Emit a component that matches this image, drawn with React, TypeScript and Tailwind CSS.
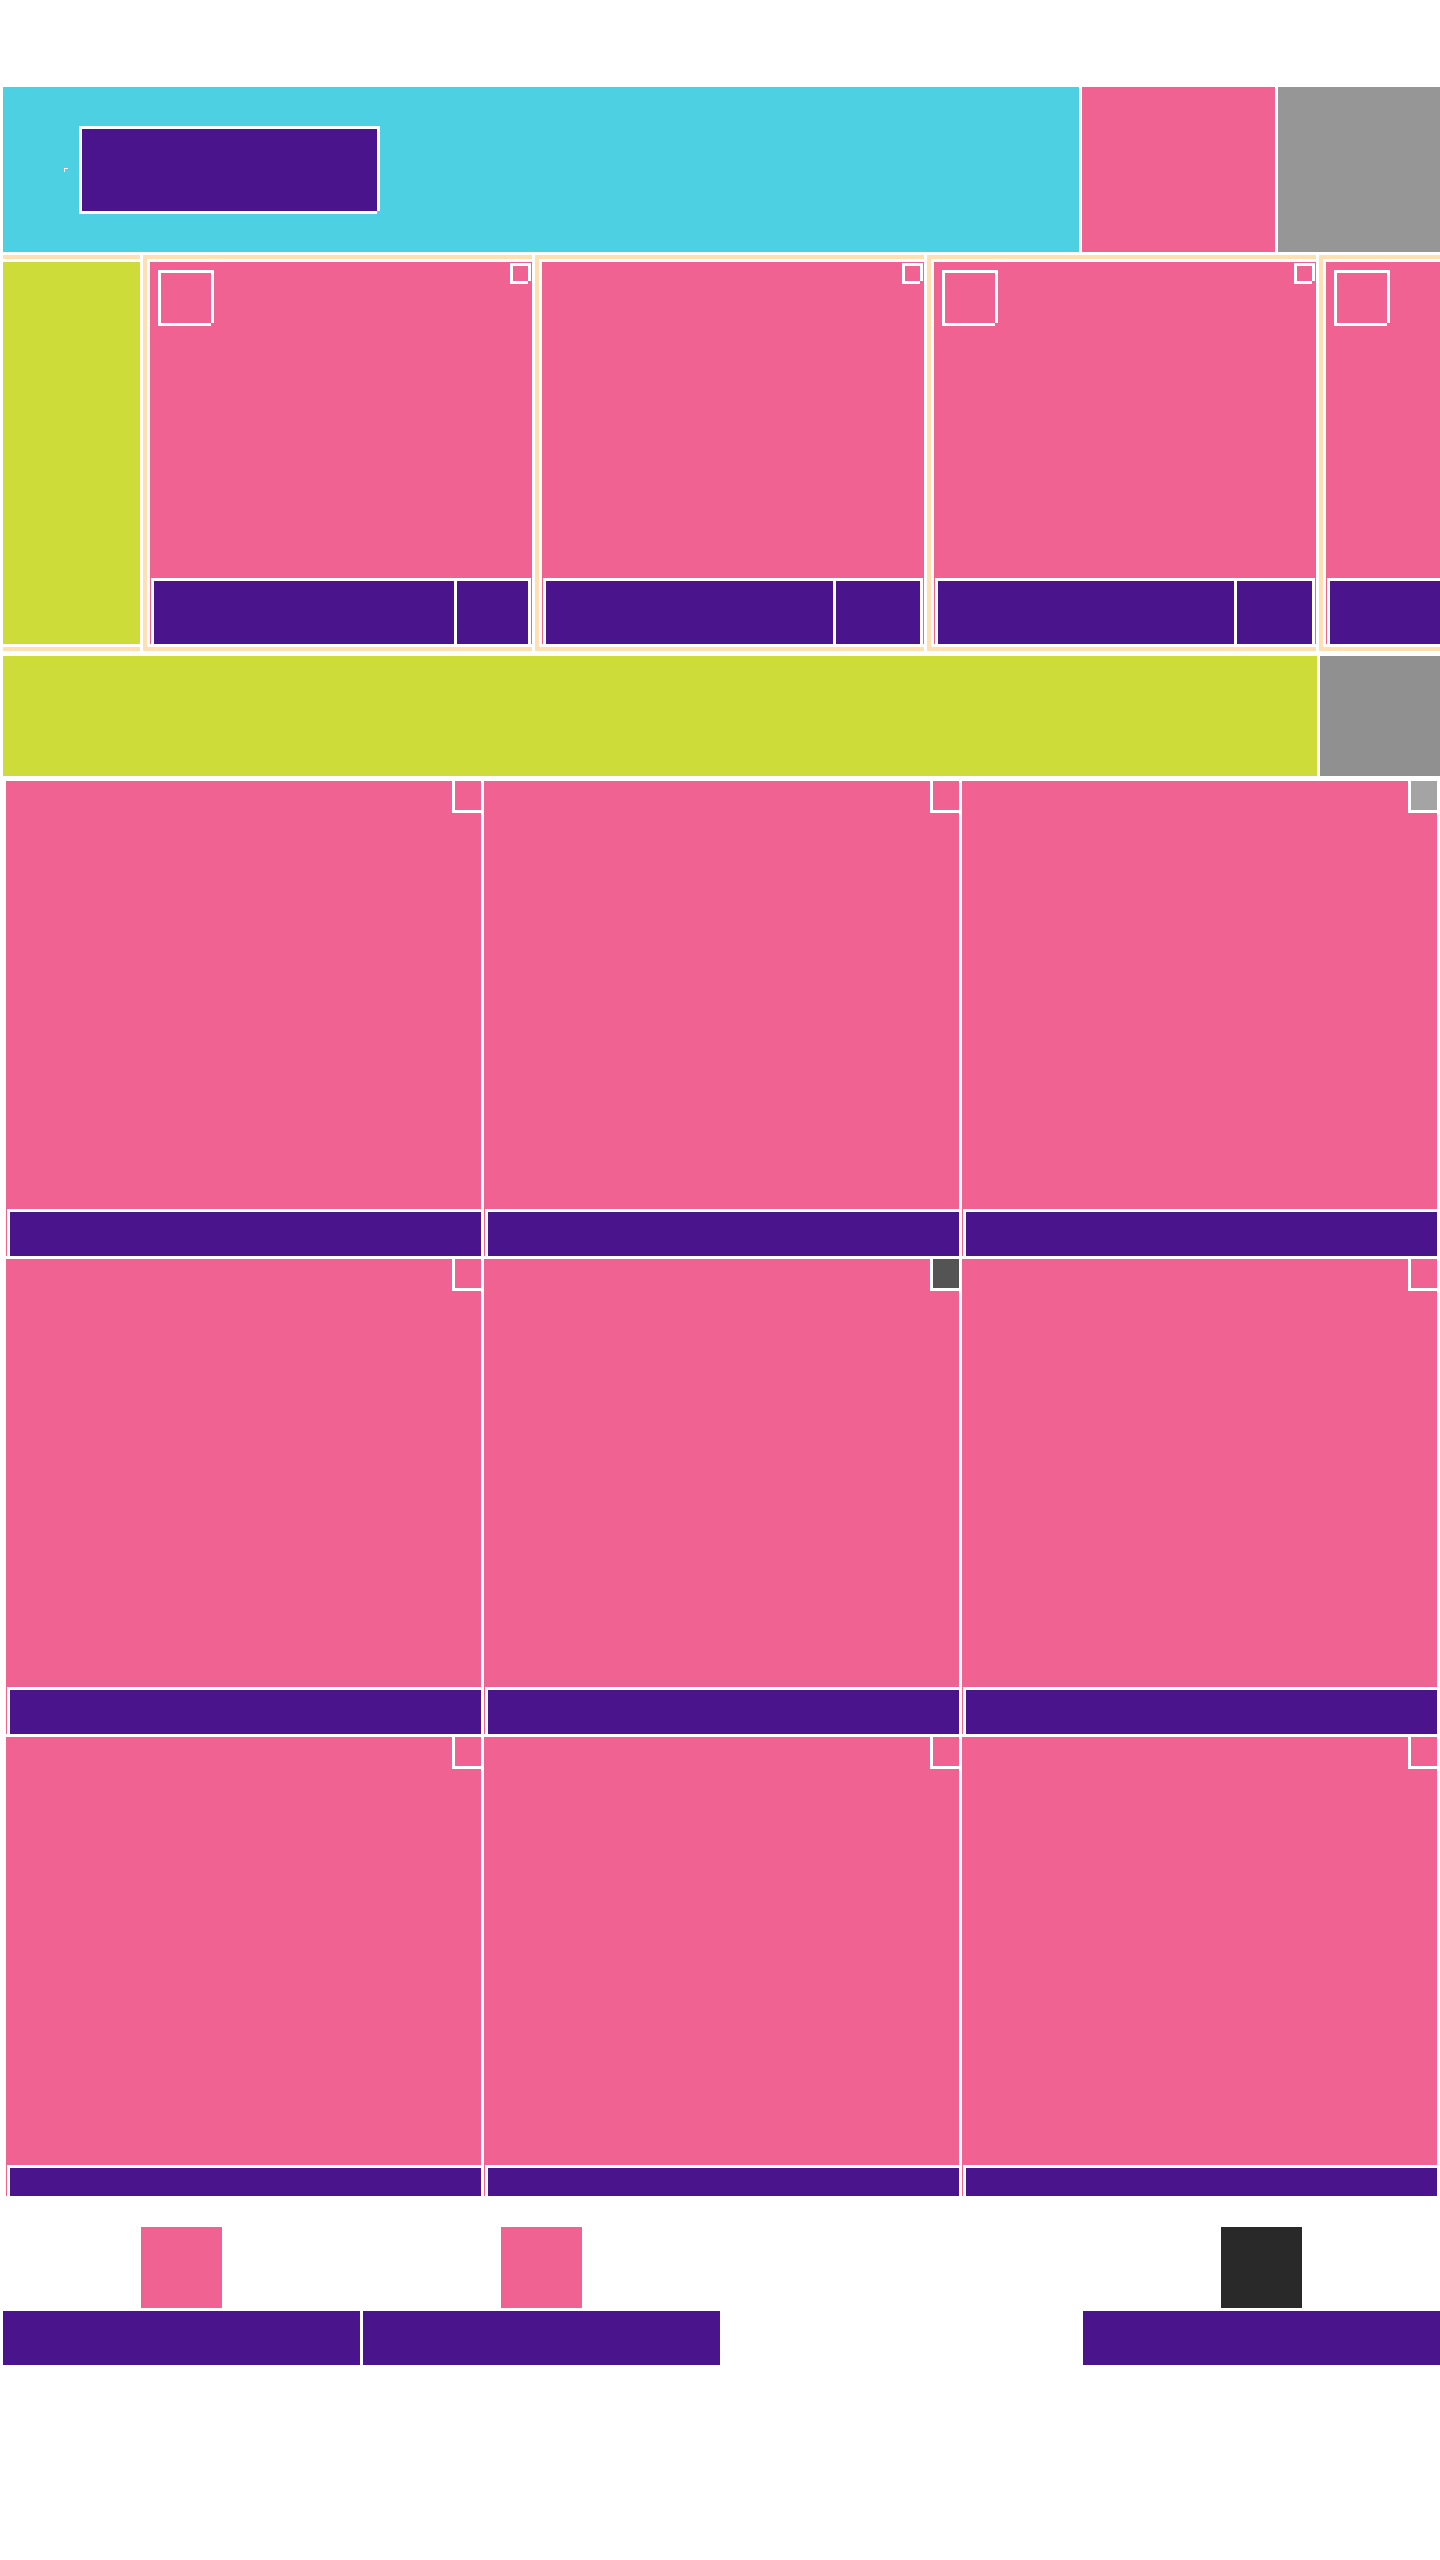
import clsx from 'clsx';

type StoryCard = { badge: boolean; metaWidth: string };

const stories: StoryCard[] = [
  { badge: true, metaWidth: 'w-[71px]' },
  { badge: false, metaWidth: 'w-[84px]' },
  { badge: true, metaWidth: 'w-[75px]' },
  { badge: true, metaWidth: 'w-[75px]' },
];

const tileMarks: string[] = [
  'bg-[#f06292]',
  'bg-[#f06292]',
  'bg-[#a4a4a4]',
  'bg-[#f06292]',
  'bg-[#545454]',
  'bg-[#f06292]',
  'bg-[#f06292]',
  'bg-[#f06292]',
  'bg-[#f06292]',
];

const tabs = [
  { name: 'First tab', icon: 'bg-[#f06292]', label: 'bg-[#4a148c]' },
  { name: 'Second tab', icon: 'bg-[#f06292]', label: 'bg-[#4a148c]' },
  { name: 'Third tab', icon: 'bg-white', label: 'bg-white' },
  { name: 'Fourth tab', icon: 'bg-[#292929]', label: 'bg-[#4a148c]' },
];

/* White outlined box whose bottom right corner is notched. */
function Frame({ className, notch }: { className: string; notch: string }) {
  return (
    <div className={clsx('border-3 border-white', className)}>
      <span className={clsx('absolute -right-[3px] -bottom-[3px] size-[3px]', notch)} />
    </div>
  );
}

function Header() {
  return (
    <header className="flex h-[165px] gap-[3px] pl-[3px]">
      <div className="flex flex-1 items-center bg-[#4dd0e1] pl-[61px]">
        <span className="size-1 border-t border-l border-white" />
        <Frame className="relative ml-[11px] h-[88px] w-[301px] bg-[#4a148c]" notch="bg-[#4dd0e1]" />
      </div>
      <button type="button" aria-label="Picture" className="w-[193px] bg-[#f06292]" />
      <button type="button" aria-label="Menu" className="w-[162px] bg-[#969696]" />
    </header>
  );
}

function Story({ card }: { card: StoryCard }) {
  return (
    <article className="w-[389px] shrink-0 bg-[#ffe0b2] py-1 pl-1">
      <div className="relative flex h-full flex-col justify-end border-y-3 border-l-3 border-white bg-[#f06292] px-px">
        {card.badge && (
          <Frame className="absolute top-2 left-2 size-14 bg-[#f06292]" notch="bg-[#f06292]" />
        )}
        <Frame className="absolute top-px right-px size-[21px] bg-[#f06292]" notch="bg-[#f06292]" />
        <div className="flex h-[66px] gap-[3px] border-x-3 border-t-3 border-white bg-white">
          <div className="flex-1 bg-[#4a148c]" />
          <div className={clsx('bg-[#4a148c]', card.metaWidth)} />
        </div>
      </div>
    </article>
  );
}

function Tile({ mark }: { mark: string }) {
  return (
    <article className="relative flex aspect-square flex-col justify-end bg-[#f06292] pl-px">
      <span className={clsx('absolute top-0 right-0 h-8 w-[29px] border-b-3 border-l-3 border-white', mark)} />
      <div className="h-[47px] border-t-3 border-l-3 border-white bg-[#4a148c]" />
    </article>
  );
}

export default function App() {
  return (
    <div className="w-full overflow-hidden bg-white pt-[87px]">
      <Header />

      <section className="mt-[3px] flex h-[396px] gap-[3px] overflow-hidden pl-[3px]">
        <div className="w-[137px] shrink-0 bg-[#ffe0b2] py-1">
          <div className="h-full border-y-3 border-white bg-[#cddc39]" />
        </div>
        {stories.map((card, i) => (
          <Story key={i} card={card} />
        ))}
      </section>

      <section className="mt-[5px] flex h-[120px] gap-[3px] pl-[3px]">
        <div className="flex-1 bg-[#cddc39]" />
        <button type="button" aria-label="Options" className="w-[120px] bg-[#909090]" />
      </section>

      <main className="mt-[5px] h-[1415px] overflow-hidden pr-[3px] pl-[6px]">
        <div className="grid grid-cols-3 gap-[3px]">
          {tileMarks.map((mark, i) => (
            <Tile key={i} mark={mark} />
          ))}
        </div>
      </main>

      <nav className="mt-[31px] grid grid-cols-4 gap-[3px] pl-[3px]">
        {tabs.map((tab) => (
          <button key={tab.name} type="button" aria-label={tab.name} className="flex flex-col items-center gap-[3px]">
            <span className={clsx('size-[81px]', tab.icon)} />
            <span className={clsx('h-[54px] w-full', tab.label)} />
          </button>
        ))}
      </nav>
    </div>
  );
}
